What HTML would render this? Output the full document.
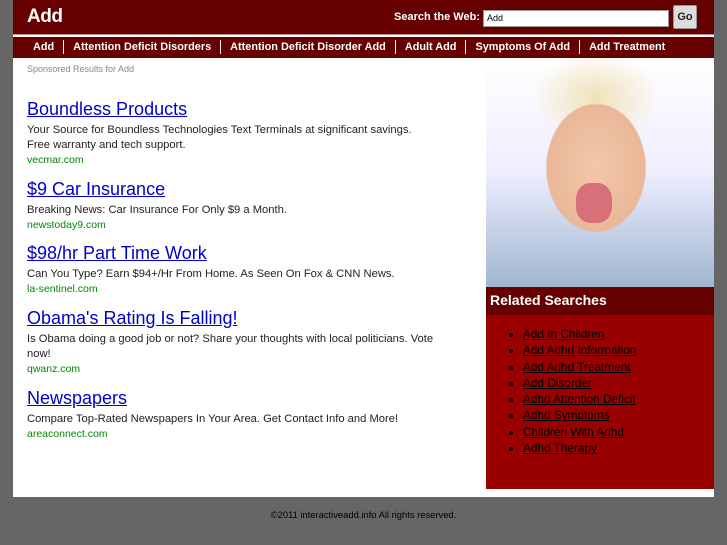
<!DOCTYPE html>
<html><head><meta charset="utf-8"><style>
*{margin:0;padding:0;box-sizing:border-box}
body{width:727px;height:545px;background:#666;font-family:"Liberation Sans",sans-serif;position:relative;overflow:hidden}
#wrap{position:absolute;left:13px;top:0;width:701px;height:497px;background:#fff}
#hdr{position:absolute;left:0;top:0;width:701px;height:35px;background:#660000;border-bottom:1px solid #b88}
#hdr h1{position:absolute;left:14px;top:6px;color:#fff;font-size:19px;font-weight:bold;letter-spacing:-0.5px}
#sw{position:absolute;left:381px;top:11px;color:#fff;font-size:11px;font-weight:bold}
#inp{position:absolute;left:470px;top:10px;width:186px;height:17px;background:#fff;border:1px solid #999;font-size:9px;padding:2px 3px}
#go{position:absolute;left:660px;top:5px;width:24px;height:24px;background:#ddd;border:1px solid #999;border-radius:2px;font-size:11px;font-weight:bold;text-align:center;line-height:22px;color:#222}
#nav{position:absolute;left:0;top:37px;width:701px;height:21px;background:#660000;color:#fff;font-size:10.9px;font-weight:bold;white-space:nowrap;padding-left:20px;line-height:21px}
#nav span{display:inline-block;padding:0 9px;border-left:1px solid #fff;line-height:14px}
#nav span:first-child{border:none;padding-left:0}
#spon{position:absolute;left:14px;top:64px;font-size:9px;color:#888}
.ad{position:absolute;left:14px;width:420px}
.ad a{color:#00c;font-size:18px;text-decoration:underline}
.ad p{font-size:11.2px;color:#222;line-height:15px;margin-top:3px}
.ad .u{color:#080;font-size:10.5px;line-height:14px}
#img{position:absolute;left:473px;top:58px;width:228px;height:229px;background:radial-gradient(ellipse 70px 90px at 110px 110px,#f2c7a8 0%,#e9b898 70%,transparent 72%),radial-gradient(ellipse 80px 60px at 110px 40px,#f0e2b8 0%,transparent 80%),linear-gradient(#fff 0%,#eef 50%,#9fb6cf 100%)}
#img:after{content:"";position:absolute;left:90px;top:125px;width:36px;height:40px;background:#d8707a;border-radius:40%}
#rel{position:absolute;left:473px;top:287px;width:228px;height:202px;background:#990000}
#rel h2{height:28px;background:#660000;color:#fff;font-size:14px;line-height:26px;padding-left:4px}
#rel ul{margin:11px 0 0 37px;font-size:11.8px;line-height:16.3px;color:#000}
#rel li a{color:#000;text-decoration:underline}
#foot{position:absolute;top:509px;left:0;width:727px;text-align:center;font-size:9.4px;color:#000}
</style></head><body>
<div id="wrap">
<div id="hdr"><h1>Add</h1><div id="sw">Search the Web:</div><div id="inp">Add</div><div id="go">Go</div></div>
<div id="nav"><span>Add</span><span>Attention Deficit Disorders</span><span>Attention Deficit Disorder Add</span><span>Adult Add</span><span>Symptoms Of Add</span><span>Add Treatment</span></div>
<div id="spon">Sponsored Results for Add</div>
<div class="ad" style="top:99px"><a>Boundless Products</a><p>Your Source for Boundless Technologies Text Terminals at significant savings.<br>Free warranty and tech support.</p><div class="u">vecmar.com</div></div>
<div class="ad" style="top:179px"><a>$9 Car Insurance</a><p>Breaking News: Car Insurance For Only $9 a Month.</p><div class="u">newstoday9.com</div></div>
<div class="ad" style="top:243px"><a>$98/hr Part Time Work</a><p>Can You Type? Earn $94+/Hr From Home. As Seen On Fox &amp; CNN News.</p><div class="u">la-sentinel.com</div></div>
<div class="ad" style="top:308px"><a>Obama's Rating Is Falling!</a><p>Is Obama doing a good job or not? Share your thoughts with local politicians. Vote<br>now!</p><div class="u">qwanz.com</div></div>
<div class="ad" style="top:388px"><a>Newspapers</a><p>Compare Top-Rated Newspapers In Your Area. Get Contact Info and More!</p><div class="u">areaconnect.com</div></div>
<div id="img"></div>
<div id="rel"><h2>Related Searches</h2><ul>
<li><a>Add In Children</a></li><li><a>Add Adhd Information</a></li><li><a>Add Adhd Treatment</a></li><li><a>Add Disorder</a></li><li><a>Adhd Attention Deficit</a></li><li><a>Adhd Symptoms</a></li><li><a>Children With Adhd</a></li><li><a>Adhd Therapy</a></li></ul></div>
</div>
<div id="foot">©2011 interactiveadd.info All rights reserved.</div>
</body></html>
